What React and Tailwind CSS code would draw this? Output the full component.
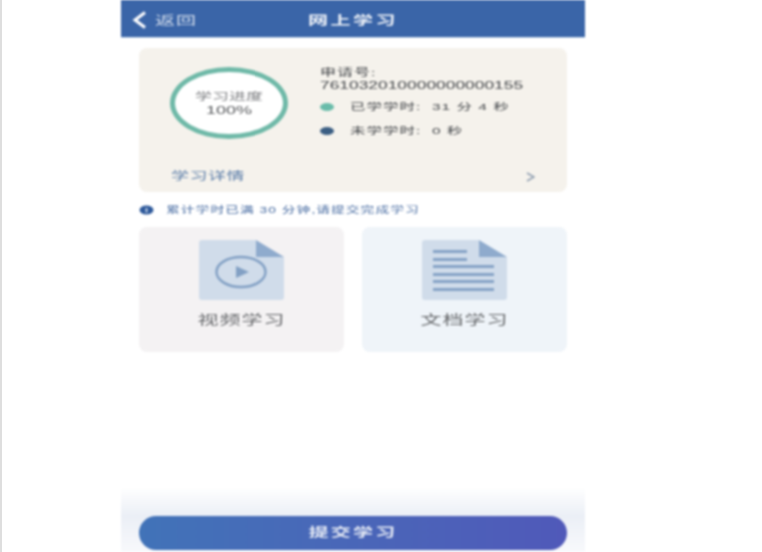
const SANS = 'font-["Liberation_Sans","Noto_Sans_CJK_SC",sans-serif]';

function T({ className = "", children }) {
  return (
    <span className={`inline-block origin-center scale-y-[0.62] whitespace-nowrap ${className}`}>
      {children}
    </span>
  );
}

function DocShape({ children }) {
  return (
    <svg width="85" height="60" viewBox="0 0 85 60" className="block">
      <path d="M3 0H57V17H85V57a3 3 0 0 1-3 3H3a3 3 0 0 1-3-3V3a3 3 0 0 1 3-3Z" fill="#d0dcea" />
      <path d="M57 0L85 17H57Z" fill="#8fabcd" />
      {children}
    </svg>
  );
}

function VideoIcon() {
  return (
    <DocShape>
      <ellipse cx="42" cy="32" rx="24.5" ry="15" fill="none" stroke="#82a0c4" strokeWidth="2.4" />
      <path d="M37 26L50 32L37 38Z" fill="#82a0c4" />
    </DocShape>
  );
}

function TextIcon() {
  return (
    <DocShape>
      <g fill="#86a3c6">
        <rect x="11" y="10" width="34" height="3" />
        <rect x="11" y="18" width="34" height="3" />
        <rect x="11" y="25" width="61" height="3" />
        <rect x="11" y="33" width="61" height="3" />
        <rect x="11" y="40" width="61" height="3" />
        <rect x="11" y="48" width="61" height="3" />
      </g>
    </DocShape>
  );
}

function Entry({ bg, icon, label }) {
  return (
    <div className={`flex h-[125px] flex-1 flex-col items-center rounded-lg pt-[13px] ${bg}`}>
      {icon}
      <div className="mt-[10px] flex h-[20px] items-center justify-center">
        <T className="text-[21px] tracking-[1px] text-[#66686b]">{label}</T>
      </div>
    </div>
  );
}

export default function App() {
  return (
    <div className={`flex h-[552px] w-[762px] overflow-hidden bg-white ${SANS}`}>
      <div className="h-full w-[2px] bg-[#dedede]" />
      <div className="ml-[119px] flex h-full w-[464px] flex-col blur-[1px]">
        <header className="relative flex h-[38px] items-center justify-center border-b border-[#c9d9ee] bg-[#3a65a8] pt-[5px]">
          <div className="absolute left-[11px] top-[2px] flex h-[37px] items-center gap-[8px]">
            <svg width="15" height="18" viewBox="0 0 15 18" className="-mt-[1px]">
              <path d="M13 1.5L3 9L13 16.5" fill="none" stroke="#fff" strokeWidth="3" />
            </svg>
            <T className="text-[20px] tracking-[1px] text-[#d4deec]">返回</T>
          </div>
          <T className="text-[20px] font-semibold tracking-[2.5px] text-[#eef2f8]">网上学习</T>
        </header>

        <main className="flex flex-1 flex-col px-[18px] pt-[10px]">
          <section className="flex h-[144px] flex-col rounded-lg bg-[#f5f2ec]">
            <div className="flex flex-1 pl-[31px] pt-[19px]">
              <div className="flex h-[72px] w-[118px] shrink-0 flex-col items-center justify-center rounded-[50%] border-[5px] border-[#6fb9a8] bg-white">
                <div className="flex h-[13px] items-center">
                  <T className="text-[17px] leading-none text-[#808285]">学习进度</T>
                </div>
                <div className="mt-[1px] flex h-[13px] items-center">
                  <T className="text-[18px] leading-none text-[#55575a]">100%</T>
                </div>
              </div>
              <div className="ml-[32px] flex flex-col text-[#45484c]">
                <div className="flex h-[12px] items-center">
                  <T className="text-[16px] tracking-[1px]">申请号:</T>
                </div>
                <div className="flex h-[13px] items-center">
                  <T className="text-[17.4px]">761032010000000000155</T>
                </div>
                <div className="mt-[8px] flex h-[14px] items-center">
                  <span className="h-[8px] w-[14px] rounded-[50%] bg-[#69bcaa]" />
                  <T className="ml-[16px] text-[15.5px] tracking-[1px]">已学学时:&nbsp;&nbsp;31 分 4 秒</T>
                </div>
                <div className="mt-[10px] flex h-[14px] items-center">
                  <span className="h-[8px] w-[14px] rounded-[50%] bg-[#3b5e83]" />
                  <T className="ml-[16px] text-[15.5px] tracking-[1px]">未学学时:&nbsp;&nbsp;0 秒</T>
                </div>
              </div>
            </div>
            <div className="flex h-[34px] items-center justify-between pl-[32px] pr-[32px] pt-[3px]">
              <T className="text-[18px] tracking-[0.5px] text-[#5f80ab]">学习详情</T>
              <svg width="9" height="10" viewBox="0 0 9 10">
                <path d="M1 1L8 5L1 9" fill="none" stroke="#8f9eb0" strokeWidth="1.6" />
              </svg>
            </div>
          </section>

          <div className="mt-[11px] flex h-[14px] items-center">
            <svg width="15" height="10" viewBox="0 0 15 10">
              <ellipse cx="7.5" cy="5" rx="7" ry="4.6" fill="#2f5a9b" />
              <rect x="6.7" y="3" width="1.6" height="4.5" fill="#dbe5f2" />
            </svg>
            <T className="ml-[12px] text-[13.8px] tracking-[1px] text-[#4469a0]">累计学时已满 30 分钟,请提交完成学习</T>
          </div>

          <div className="mt-[10px] flex gap-[18px]">
            <Entry bg="bg-[#f4f2f3]" icon={<VideoIcon />} label="视频学习" />
            <Entry bg="bg-[#eff4f9]" icon={<TextIcon />} label="文档学习" />
          </div>
        </main>

        <footer className="flex h-[72px] items-end bg-gradient-to-b from-white from-10% via-[#ebeff6] via-50% to-[#f8f9fc] px-[18px] pb-[2px]">
          <button className="flex h-[34px] w-full items-center justify-center rounded-full bg-gradient-to-r from-[#4173b8] to-[#5059b9]">
            <T className="text-[20px] font-semibold tracking-[2.2px] text-[#e6ebf5]">提交学习</T>
          </button>
        </footer>
      </div>
    </div>
  );
}
